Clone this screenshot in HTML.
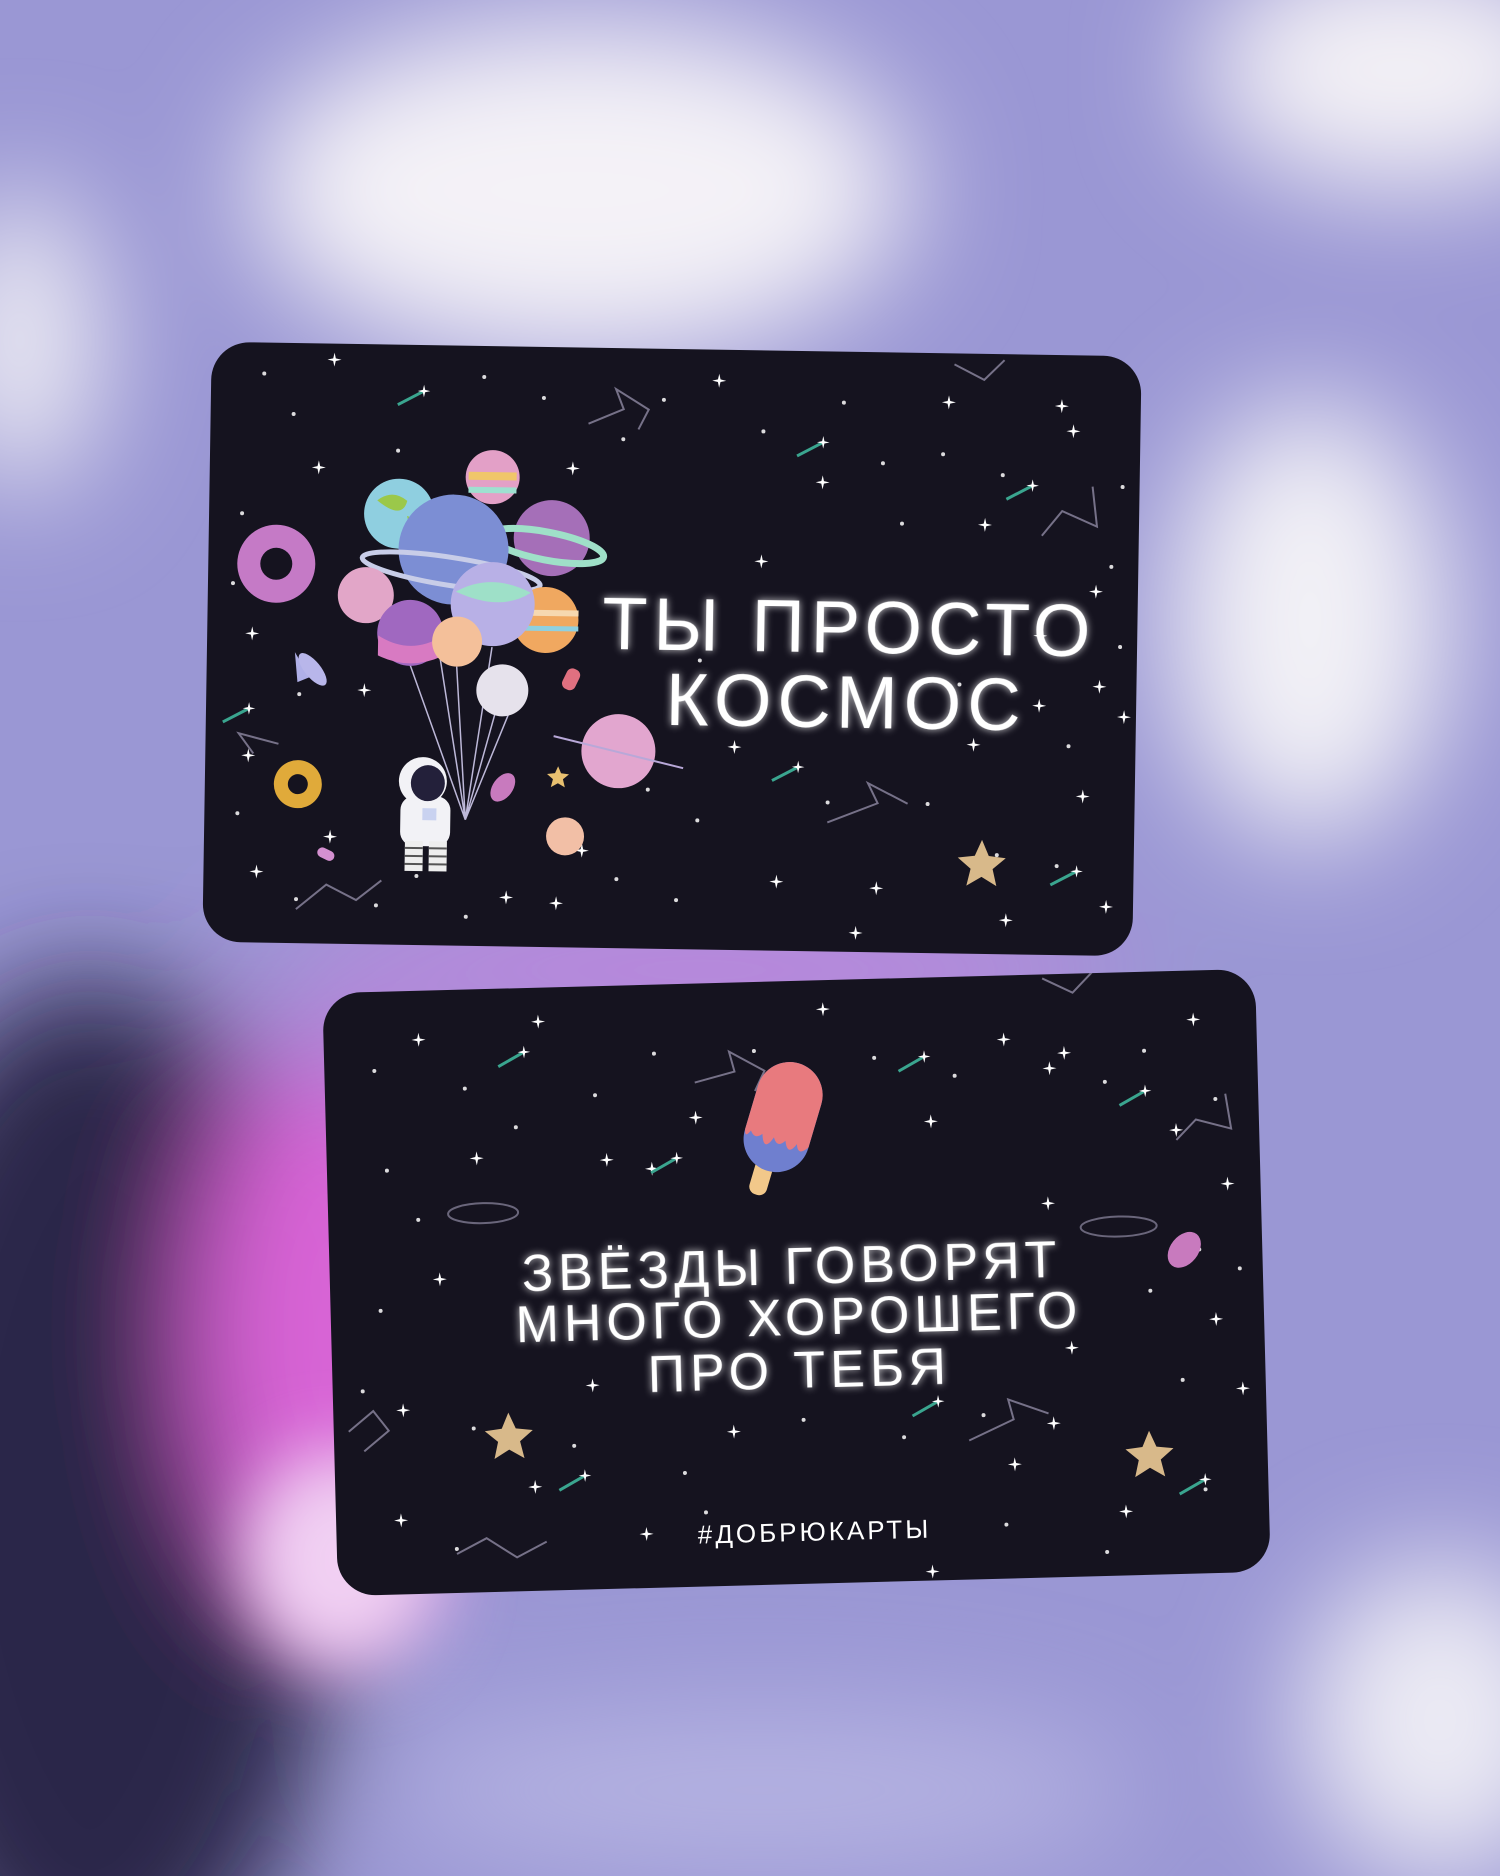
<!DOCTYPE html>
<html><head><meta charset="utf-8"><style>
html,body{margin:0;padding:0;width:1500px;height:1876px;overflow:hidden;background:#9d9bd6}
svg{display:block;overflow:hidden}
</style></head><body>
<svg width="1500" height="1876" viewBox="0 0 1500 1876" xmlns="http://www.w3.org/2000/svg">
<defs>
<filter id="bl" x="-50%" y="-50%" width="200%" height="200%"><feGaussianBlur stdDeviation="60"/></filter>
<filter id="bl2" x="-50%" y="-50%" width="200%" height="200%"><feGaussianBlur stdDeviation="35"/></filter>
<filter id="glow" x="-20%" y="-50%" width="140%" height="200%"><feGaussianBlur in="SourceGraphic" stdDeviation="4" result="b"/><feComponentTransfer in="b" result="b2"><feFuncA type="linear" slope="0.8"/></feComponentTransfer><feMerge><feMergeNode in="b2"/><feMergeNode in="SourceGraphic"/></feMerge></filter>
<path id="s" d="M0,-7 L1.3,-1.3 L7,0 L1.3,1.3 L0,7 L-1.3,1.3 L-7,0 L-1.3,-1.3Z" fill="#fff"/>
<g id="cm"><line x1="0" y1="0" x2="-26" y2="14" stroke="#3aa58f" stroke-width="3"/><use href="#s" transform="scale(0.9)" fill="#8fe0d0"/></g>
<clipPath id="c1"><rect x="207" y="349" width="930" height="600" rx="38"/></clipPath>
<clipPath id="c2"><rect x="330" y="981" width="933" height="603" rx="38"/></clipPath>
<clipPath id="page"><rect width="1500" height="1876"/></clipPath>
</defs>
<g clip-path="url(#page)">
<!-- background -->
<rect width="1500" height="1876" fill="#9a97d4"/>
<g filter="url(#bl)">
<ellipse cx="580" cy="190" rx="330" ry="170" fill="#f4f2f7"/>
<ellipse cx="1400" cy="70" rx="200" ry="120" fill="#f4f2f6"/>
<ellipse cx="1310" cy="620" rx="140" ry="220" fill="#f2f1f6"/>
<ellipse cx="20" cy="340" rx="80" ry="150" fill="#eeedf4"/>
<ellipse cx="90" cy="1500" rx="260" ry="520" fill="#2a2748"/>
<ellipse cx="330" cy="1330" rx="140" ry="280" fill="#d864d6"/>
<ellipse cx="1440" cy="1720" rx="140" ry="160" fill="#ecebf4"/>
<ellipse cx="760" cy="1790" rx="380" ry="80" fill="#b5b3e2"/>
<ellipse cx="700" cy="970" rx="430" ry="28" fill="#e66fe8"/>
</g>
<ellipse cx="340" cy="1560" rx="100" ry="110" fill="#f1d0f3" filter="url(#bl2)"/>

<!-- CARD 1 -->
<g transform="rotate(0.9 672 649)">
<rect x="207" y="349" width="930" height="600" rx="38" fill="#15131f"/>
<g clip-path="url(#c1)">
<g fill="#fff">
<use href="#s" x="330" y="365"/><use href="#s" x="715" y="380"/><use href="#s" x="945" y="398"/><use href="#s" x="1070" y="425"/><use href="#s" x="1058" y="400"/>
<use href="#s" x="316" y="473"/><use href="#s" x="252" y="640"/><use href="#s" x="250" y="762"/><use href="#s" x="260" y="878"/><use href="#s" x="365" y="695"/>
<use href="#s" x="333" y="842"/><use href="#s" x="510" y="900"/><use href="#s" x="820" y="480"/><use href="#s" x="983" y="520"/><use href="#s" x="1095" y="585"/>
<use href="#s" x="736" y="746"/><use href="#s" x="975" y="740"/><use href="#s" x="1085" y="790"/><use href="#s" x="780" y="880"/><use href="#s" x="880" y="885"/>
<use href="#s" x="1010" y="915"/><use href="#s" x="1110" y="900"/><use href="#s" x="860" y="930"/><use href="#s" x="646" y="745"/><use href="#s" x="585" y="852"/>
<use href="#s" x="570" y="470"/><use href="#s" x="420" y="520"/><use href="#s" x="560" y="905"/><use href="#s" x="1040" y="700"/><use href="#s" x="1100" y="680"/>
<use href="#s" x="1125" y="710"/><use href="#s" x="760" y="560"/><use href="#s" x="1040" y="630"/>
</g>
<g fill="#fff" opacity="0.85">
<circle cx="260" cy="380" r="2"/><circle cx="290" cy="420" r="2"/><circle cx="395" cy="455" r="2"/><circle cx="480" cy="380" r="2"/><circle cx="540" cy="400" r="2"/>
<circle cx="620" cy="440" r="2"/><circle cx="660" cy="400" r="2"/><circle cx="760" cy="430" r="2"/><circle cx="840" cy="400" r="2"/><circle cx="880" cy="460" r="2"/>
<circle cx="900" cy="520" r="2"/><circle cx="940" cy="450" r="2"/><circle cx="1000" cy="470" r="2"/><circle cx="1120" cy="480" r="2"/><circle cx="1110" cy="560" r="2"/>
<circle cx="240" cy="520" r="2"/><circle cx="232" cy="590" r="2"/><circle cx="300" cy="700" r="2"/><circle cx="240" cy="820" r="2"/><circle cx="300" cy="905" r="2"/>
<circle cx="380" cy="910" r="2"/><circle cx="420" cy="880" r="2"/><circle cx="470" cy="920" r="2"/><circle cx="620" cy="880" r="2"/><circle cx="680" cy="900" r="2"/>
<circle cx="700" cy="820" r="2"/><circle cx="650" cy="790" r="2"/><circle cx="830" cy="800" r="2"/><circle cx="930" cy="800" r="2"/><circle cx="1000" cy="850" r="2"/>
<circle cx="1060" cy="860" r="2"/><circle cx="960" cy="680" r="2"/><circle cx="1120" cy="640" r="2"/><circle cx="700" cy="660" r="2"/><circle cx="1070" cy="740" r="2"/>
</g>
<g stroke="#8e8aa3" stroke-width="2" fill="none" opacity="0.8">
<polyline points="585,425 620,410 612,390 645,410 635,430"/>
<polyline points="1040,530 1060,505 1095,520 1090,480"/>
<polyline points="830,820 880,800 870,780 910,800"/>
<polyline points="255,760 240,740 280,750"/>
<polyline points="300,915 330,890 360,905 385,885"/>
<polyline points="950,360 980,375 1000,355"/>
</g>
<use href="#cm" transform="translate(420 395)"/><use href="#cm" transform="translate(820 440)"/><use href="#cm" transform="translate(1030 480)"/>
<use href="#cm" transform="translate(800 765)"/><use href="#cm" transform="translate(1080 865)"/><use href="#cm" transform="translate(250 715)"/>
<path d="M985,835 l7,16 17,2 -13,11 4,17 -15,-9 -15,9 4,-17 -13,-11 17,-2z" fill="#d8b98a"/>
<path d="M560,768 l3,7 8,1 -6,5 2,8 -7,-4 -7,4 2,-8 -6,-5 8,-1z" fill="#e8c070"/>
<circle cx="275" cy="570" r="39" fill="#c57ac6"/><circle cx="275" cy="570" r="16" fill="#15131f"/>
<circle cx="300" cy="790" r="24" fill="#e0aa3a"/><circle cx="300" cy="790" r="10" fill="#15131f"/>
<path d="M520,690 L468,823 M503,690 L468,823 M457,670 L468,823 M410,668 L468,823 M492,650 L468,823 M440,660 L468,823" stroke="#bdb8d8" stroke-width="1.5"/>
<circle cx="397" cy="518" r="35" fill="#8fcfe0"/><path d="M375,505 q15,-12 30,0 q-5,20 -30,0z M405,520 q15,5 20,20 q-15,5 -20,-20z" fill="#9bc84a"/>
<circle cx="490" cy="480" r="27" fill="#e3a0c7"/><rect x="466" y="475" width="48" height="8" fill="#f0c66a"/><rect x="466" y="490" width="48" height="6" fill="#9ee0d0"/>
<circle cx="550" cy="540" r="38" fill="#a56fb8"/><ellipse cx="545" cy="548" rx="58" ry="14" fill="none" stroke="#9fe0c8" stroke-width="7" transform="rotate(10 545 548)"/>
<circle cx="452" cy="553" r="55" fill="#7c8ed4"/><ellipse cx="450" cy="575" rx="90" ry="14" fill="none" stroke="#c8cde8" stroke-width="5" transform="rotate(8 450 575)"/>
<circle cx="365" cy="600" r="28" fill="#e2a6c8"/>
<circle cx="545" cy="622" r="33" fill="#f0a860"/><rect x="512" y="612" width="66" height="6" fill="#f6d8b0"/><rect x="512" y="628" width="66" height="5" fill="#8fd0e0"/>
<circle cx="492" cy="607" r="42" fill="#b8b0e6"/><path d="M455,595 q35,-20 75,0 q-30,20 -75,0z" fill="#9ee0c8"/>
<circle cx="410" cy="637" r="33" fill="#a068c0"/><path d="M378,640 q32,20 64,0 v20 q-32,15 -64,0z" fill="#d87ac2"/>
<circle cx="457" cy="645" r="25" fill="#f4c09a"/>
<circle cx="503" cy="693" r="26" fill="#e6e2ec"/>
<circle cx="620" cy="752" r="37" fill="#e2a6cf"/><line x1="555" y1="738" x2="685" y2="768" stroke="#b8a8d8" stroke-width="2"/>
<circle cx="568" cy="838" r="19" fill="#f2bfa6"/>
<rect x="565" y="670" width="14" height="22" rx="6" fill="#e07080" transform="rotate(25 572 680)"/>
<rect x="320" y="855" width="18" height="10" rx="5" fill="#d490d0" transform="rotate(25 330 860)"/>
<path d="M295,658 l15,25 -12,5z" fill="#b0b0e8"/><ellipse cx="313" cy="675" rx="8" ry="20" fill="#b8b6ea" transform="rotate(-40 313 675)"/>
<ellipse cx="505" cy="790" rx="10" ry="16" fill="#c87abe" transform="rotate(35 505 790)"/>
<rect x="403" y="800" width="50" height="50" rx="14" fill="#f2f2f6"/>
<circle cx="425" cy="785" r="24" fill="#f2f2f6"/><ellipse cx="430" cy="787" rx="17" ry="18" fill="#23203a"/>
<rect x="408" y="845" width="18" height="30" fill="#eee"/><rect x="432" y="845" width="18" height="30" fill="#eee"/>
<path d="M408,852h18M408,860h18M408,868h18M432,852h18M432,860h18M432,868h18" stroke="#555" stroke-width="2"/>
<rect x="425" y="812" width="14" height="12" fill="#c9d2f0"/>
</g>
<text x="849" y="650" text-anchor="middle" font-family="Liberation Sans, sans-serif" font-size="74" letter-spacing="6" fill="#fff" filter="url(#glow)">ТЫ ПРОСТО</text>
<text x="847" y="725" text-anchor="middle" font-family="Liberation Sans, sans-serif" font-size="74" letter-spacing="6" fill="#fff" filter="url(#glow)">КОСМОС</text>
</g>

<!-- CARD 2 -->
<g transform="rotate(-1.5 796 1282)">
<rect x="330" y="981" width="933" height="603" rx="38" fill="#15131f"/>
<g clip-path="url(#c2)">
<g fill="#fff">
<use href="#s" x="425" y="1030"/><use href="#s" x="545" y="1015"/><use href="#s" x="830" y="1010"/><use href="#s" x="1010" y="1045"/><use href="#s" x="1070" y="1060"/>
<use href="#s" x="1200" y="1030"/><use href="#s" x="610" y="1155"/><use href="#s" x="700" y="1115"/><use href="#s" x="935" y="1125"/><use href="#s" x="480" y="1150"/>
<use href="#s" x="655" y="1165"/><use href="#s" x="1055" y="1075"/><use href="#s" x="1230" y="1195"/><use href="#s" x="1050" y="1210"/><use href="#s" x="1070" y="1355"/>
<use href="#s" x="1050" y="1430"/><use href="#s" x="590" y="1380"/><use href="#s" x="730" y="1430"/><use href="#s" x="640" y="1530"/><use href="#s" x="530" y="1480"/>
<use href="#s" x="395" y="1510"/><use href="#s" x="1010" y="1470"/><use href="#s" x="1150" y="1460"/><use href="#s" x="1215" y="1330"/><use href="#s" x="1240" y="1400"/>
<use href="#s" x="925" y="1575"/><use href="#s" x="1120" y="1520"/><use href="#s" x="400" y="1400"/><use href="#s" x="440" y="1270"/><use href="#s" x="1180" y="1140"/>
</g>
<g fill="#fff" opacity="0.85">
<circle cx="380" cy="1060" r="2"/><circle cx="470" cy="1080" r="2"/><circle cx="520" cy="1120" r="2"/><circle cx="600" cy="1090" r="2"/><circle cx="660" cy="1050" r="2"/>
<circle cx="760" cy="1050" r="2"/><circle cx="880" cy="1060" r="2"/><circle cx="960" cy="1080" r="2"/><circle cx="1110" cy="1090" r="2"/><circle cx="1150" cy="1060" r="2"/>
<circle cx="1220" cy="1110" r="2"/><circle cx="390" cy="1160" r="2"/><circle cx="420" cy="1210" r="2"/><circle cx="380" cy="1300" r="2"/><circle cx="360" cy="1380" r="2"/>
<circle cx="1200" cy="1260" r="2"/><circle cx="1240" cy="1280" r="2"/><circle cx="1150" cy="1300" r="2"/><circle cx="1180" cy="1390" r="2"/><circle cx="980" cy="1420" r="2"/>
<circle cx="900" cy="1440" r="2"/><circle cx="800" cy="1420" r="2"/><circle cx="680" cy="1470" r="2"/><circle cx="570" cy="1440" r="2"/><circle cx="470" cy="1420" r="2"/>
<circle cx="450" cy="1540" r="2"/><circle cx="700" cy="1510" r="2"/><circle cx="1000" cy="1530" r="2"/><circle cx="1100" cy="1560" r="2"/><circle cx="1200" cy="1500" r="2"/>
</g>
<g stroke="#8e8aa3" stroke-width="2" fill="none" opacity="0.8">
<polyline points="700,1080 740,1070 735,1050 770,1070 760,1090"/>
<polyline points="1180,1150 1200,1130 1235,1140 1230,1105"/>
<polyline points="965,1445 1010,1425 1005,1405 1045,1420"/>
<polyline points="345,1420 370,1400 385,1420 360,1440"/>
<polyline points="450,1545 480,1530 510,1550 540,1535"/>
<polyline points="1050,985 1080,1000 1100,980"/>
</g>
<g stroke="#8e8aa3" stroke-width="2" fill="none" opacity="0.7">
<ellipse cx="485" cy="1205" rx="35" ry="10"/><ellipse cx="1120" cy="1235" rx="38" ry="10"/>
</g>
<use href="#cm" transform="translate(530 1045)"/><use href="#cm" transform="translate(930 1060)"/><use href="#cm" transform="translate(1150 1100)"/>
<use href="#cm" transform="translate(680 1155)"/><use href="#cm" transform="translate(580 1470)"/><use href="#cm" transform="translate(935 1405)"/><use href="#cm" transform="translate(1200 1490)"/>
<path d="M505,1405 l7,16 17,2 -13,11 4,17 -15,-9 -15,9 4,-17 -13,-11 17,-2z" fill="#d8b98a"/>
<path d="M1145,1440 l7,16 17,2 -13,11 4,17 -15,-9 -15,9 4,-17 -13,-11 17,-2z" fill="#d8b98a"/>
<ellipse cx="1185" cy="1260" rx="14" ry="20" fill="#c87abe" transform="rotate(40 1185 1260)"/>
<g transform="rotate(18 790 1125)">
<rect x="772" y="1150" width="18" height="50" rx="8" fill="#f2c88a"/>
<rect x="752" y="1062" width="66" height="112" rx="33" fill="#6f7fcf"/>
<path d="M752,1095 a33,33 0 0 1 66,0 v45 q-8,12 -12,0 q-6,15 -12,0 q-6,10 -12,0 q-6,18 -12,0 q-6,8 -12,0 q-4,10 -6,0z" fill="#e87a7e"/>
</g>
</g>
<g font-family="Liberation Sans, sans-serif" fill="#fff" text-anchor="middle" font-size="52" letter-spacing="5" filter="url(#glow)">
<text x="792" y="1284">ЗВЁЗДЫ ГОВОРЯТ</text>
<text x="798" y="1335">МНОГО ХОРОШЕГО</text>
<text x="797" y="1388">ПРО ТЕБЯ</text>
</g>
<text x="808" y="1541" text-anchor="middle" font-family="Liberation Sans, sans-serif" font-size="26" letter-spacing="3" fill="#fff">#ДОБРЮКАРТЫ</text>
</g>
</g>
</svg>
</body></html>
